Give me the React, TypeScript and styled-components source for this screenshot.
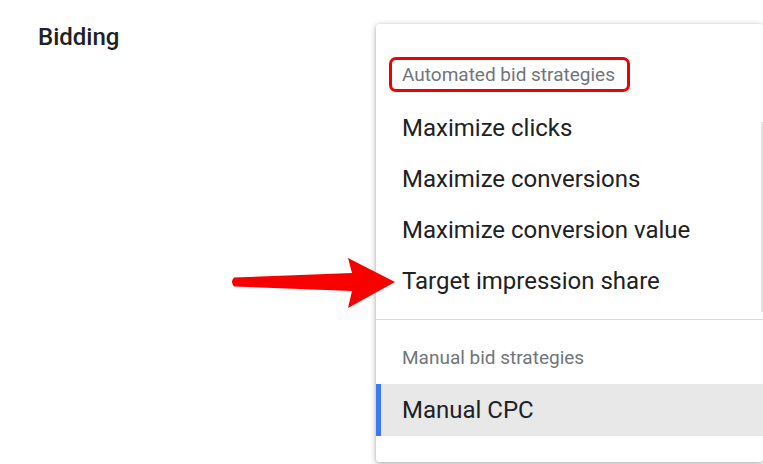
import styled, {createGlobalStyle} from "styled-components";

const GlobalStyle = createGlobalStyle`
	html, body {
		margin: 0;
		padding: 0;
		background: #fff;
		font-family: Roboto, "Liberation Sans", sans-serif;
	}
`;

const automated = [
  "Maximize clicks",
  "Maximize conversions",
  "Maximize conversion value",
  "Target impression share",
];

export default function App() {
  return (
    <>
      <GlobalStyle/>
      <Page>
        <Title>Bidding</Title>
        <Menu>
          <ScrollThumb/>
          <Section>
            <GroupLabel $highlighted>Automated bid strategies</GroupLabel>
            {automated.map((item) => <Option key={item}>{item}</Option>)}
          </Section>
          <Divider/>
          <Section $manual>
            <GroupLabel>Manual bid strategies</GroupLabel>
            <Option $selected>Manual CPC</Option>
          </Section>
        </Menu>
        <Arrow viewBox="0 0 166 52">
          <path d="M4 20.5 L122 16 L118 1 L165 25 L118 51 L122 34 L4 29.5 Q0 25 4 20.5 Z" fill="#f90000"/>
        </Arrow>
      </Page>
    </>
  );
}

const Page = styled.div`
	position: relative;
	width: 763px;
	height: 464px;
	overflow: hidden;
	display: flex;
	flex-direction: row;
	align-items: flex-start;
`;

const Title = styled.div`
	width: 338px;
	padding: 22px 0 0 38px;
	font-size: 24px;
	font-weight: 500;
	line-height: 30px;
	color: #202124;
`;

const Menu = styled.div`
	position: relative;
	margin-top: 24px;
	width: 387px;
	padding-bottom: 26px;
	background: #fff;
	border-radius: 3px;
	box-shadow: 0 1px 4px rgba(0, 0, 0, 0.28), 0 2px 8px rgba(0, 0, 0, 0.12);
`;

const ScrollThumb = styled.div`
	position: absolute;
	right: 0;
	top: 98px;
	width: 2px;
	height: 190px;
	background: #e4e4e4;
`;

const Section = styled.div<{ $manual?: boolean }>`
	display: flex;
	flex-direction: column;
	align-items: flex-start;
	padding: ${(p) => (p.$manual ? "26px 0 0" : "33px 0 13px")};
`;

const GroupLabel = styled.div<{ $highlighted?: boolean }>`
	box-sizing: border-box;
	margin-left: ${(p) => (p.$highlighted ? "13px" : "26px")};
	margin-bottom: ${(p) => (p.$highlighted ? "10px" : "14px")};
	padding: ${(p) => (p.$highlighted ? "0 12px 0 10px" : "0")};
	height: ${(p) => (p.$highlighted ? "35px" : "24px")};
	line-height: ${(p) => (p.$highlighted ? "29px" : "24px")};
	border: ${(p) => (p.$highlighted ? "3px solid #f00000" : "none")};
	border-radius: 7px;
	font-size: 19px;
	color: #70757a;
`;

const Option = styled.div<{ $selected?: boolean }>`
	box-sizing: border-box;
	align-self: stretch;
	height: ${(p) => (p.$selected ? "52px" : "51px")};
	display: flex;
	align-items: center;
	padding-left: ${(p) => (p.$selected ? "21px" : "26px")};
	border-left: ${(p) => (p.$selected ? "5px solid #3c78f0" : "none")};
	background: ${(p) => (p.$selected ? "#e8e8e8" : "transparent")};
	font-size: 24px;
	color: #202124;
`;

const Divider = styled.div`
	height: 1px;
	background: #dadada;
`;

const Arrow = styled.svg`
	position: absolute;
	left: 230px;
	top: 257px;
	width: 166px;
	height: 52px;
`;
